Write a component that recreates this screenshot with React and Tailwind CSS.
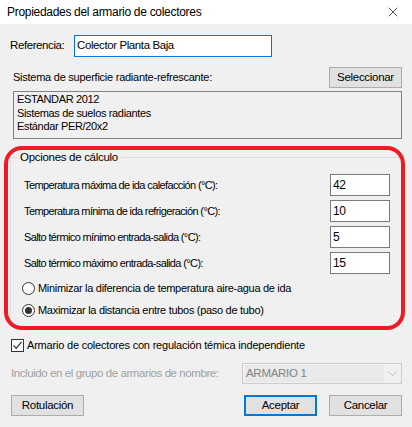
import { X } from 'lucide-react';

const font = { fontFamily: '"Liberation Sans", Arial, sans-serif' };

const NumberRow = ({ label, value }) => (
  <div className="flex items-center justify-between h-[22px] pl-[13px] pr-[12px]">
    <span className="text-[11px] tracking-[-0.62px] text-black">{label}</span>
    <div className="w-[60px] h-[22px] bg-white border border-[#7a7a7a] flex items-center px-[2px] text-[12px] tracking-[-0.3px] text-black">
      {value}
    </div>
  </div>
);

const Radio = ({ checked, label }) => (
  <div className="flex items-center h-[13px] gap-[3px] pl-[11px]">
    <div className="w-[13px] h-[13px] rounded-full border border-[#333333] bg-white flex items-center justify-center">
      {checked && <div className="w-[7px] h-[7px] rounded-full bg-[#333333]" />}
    </div>
    <span className="text-[11px] tracking-[-0.3px] text-black">{label}</span>
  </div>
);

const Button = ({ children, primary }) => (
  <div
    className={`w-[73px] h-[21px] flex items-center justify-center text-[11.5px] tracking-[-0.3px] text-black bg-[#e1e1e1] ${
      primary ? 'border-2 border-[#0078d7]' : 'border border-[#adadad]'
    }`}
  >
    {children}
  </div>
);

export default function App() {
  return (
    <div className="w-[412px] h-[427px] bg-[#f0f0f0] relative overflow-hidden" style={font}>
      {/* Title bar */}
      <div className="h-[24px] bg-white flex items-center justify-between pl-[7px] pr-[11px]">
        <span className="text-[12px] tracking-[-0.3px] text-black">Propiedades del armario de colectores</span>
        <X size={16} strokeWidth={1} className="text-black" />
      </div>

      {/* Referencia */}
      <div className="flex items-center mt-[11px] pl-[10px] h-[22px]">
        <span className="text-[11.5px] tracking-[-0.4px] text-black w-[64px]">Referencia:</span>
        <div className="w-[198px] h-[22px] bg-white border border-[#0078d7] flex items-center px-[2px] text-[11.5px] tracking-[-0.4px] text-black">
          Colector Planta Baja
        </div>
      </div>

      {/* Sistema */}
      <div className="flex items-center justify-between mt-[10px] pl-[13px] pr-[10px] h-[21px]">
        <span className="text-[11px] tracking-[-0.25px] text-black">Sistema de superficie radiante-refrescante:</span>
        <Button>Seleccionar</Button>
      </div>
      <div className="mt-[3px] ml-[13px] w-[389px] h-[48px] border border-[#828282] pl-[3px] pt-[1px] text-[11px] tracking-[-0.35px] leading-[13.5px] text-black">
        <div>ESTANDAR 2012</div>
        <div>Sistemas de suelos radiantes</div>
        <div>Estándar PER/20x2</div>
      </div>

      {/* Opciones de calculo */}
      <div className="relative mt-[18px] ml-[10px] w-[393px] h-[170px] border border-[#dcdcdc] border-b-0">
        <span className="absolute -top-[8px] left-[6px] px-[3px] bg-[#f0f0f0] text-[11.5px] tracking-[-0.3px] leading-[14px] text-black">
          Opciones de cálculo
        </span>
        <div className="flex flex-col gap-[4px] pt-[16px]">
          <NumberRow label="Temperatura máxima de ida calefacción (°C):" value="42" />
          <NumberRow label="Temperatura mínima de ida refrigeración (°C):" value="10" />
          <NumberRow label="Salto térmico mínimo entrada-salida (°C):" value="5" />
          <NumberRow label="Salto térmico máximo entrada-salida (°C):" value="15" />
        </div>
        <div className="flex flex-col gap-[9px] mt-[8px]">
          <Radio label="Minimizar la diferencia de temperatura aire-agua de ida" />
          <Radio checked label="Maximizar la distancia entre tubos (paso de tubo)" />
        </div>
      </div>

      {/* Checkbox */}
      <div className="flex items-center gap-[3px] mt-[12px] pl-[11px] h-[13px]">
        <div className="w-[13px] h-[13px] border border-[#333333] bg-white flex items-center justify-center">
          <svg width="11" height="11" viewBox="0 0 11 11">
            <path d="M1.5 5.5 L4.2 8.3 L9.5 2" fill="none" stroke="#333333" strokeWidth="1.2" />
          </svg>
        </div>
        <span className="text-[11px] tracking-[-0.2px] text-black">Armario de colectores con regulación témica independiente</span>
      </div>

      {/* Incluido */}
      <div className="flex items-center justify-between mt-[11px] pl-[11px] pr-[10px] h-[21px]">
        <span className="text-[11.5px] tracking-[-0.42px] text-[#a0a0a0] whitespace-nowrap">Incluido en el grupo de armarios de nombre:</span>
        <div className="w-[160px] h-[21px] border border-[#cccccc] bg-[#f0f0f0] flex items-center">
          <div className="flex-1 h-[17px] bg-[#e9e9e9] ml-[2px] flex items-center pl-[1px] text-[11.5px] tracking-[-0.3px] text-[#838383]">
            ARMARIO 1
          </div>
          <div className="w-[17px] flex items-center justify-center">
            <svg width="9" height="6" viewBox="0 0 9 6">
              <path d="M0.5 0.5 L4.5 4.5 L8.5 0.5" fill="none" stroke="#bfbfbf" strokeWidth="1" />
            </svg>
          </div>
        </div>
      </div>

      {/* Buttons */}
      <div className="flex items-center justify-between mt-[11px] pl-[11px] pr-[10px]">
        <Button>Rotulación</Button>
        <div className="flex gap-[12px]">
          <Button primary>Aceptar</Button>
          <Button>Cancelar</Button>
        </div>
      </div>

      {/* Red annotation */}
      <div className="absolute left-[4px] top-[146px] w-[401px] h-[184px] border-[4px] border-[#ed1c24] rounded-[18px] pointer-events-none" />
    </div>
  );
}
